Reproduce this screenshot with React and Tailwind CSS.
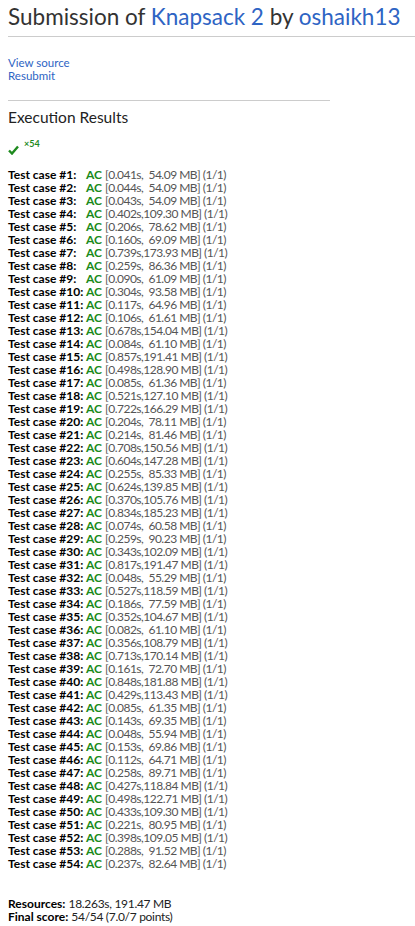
const cases = [
  ["0.041s", "54.09"], ["0.044s", "54.09"], ["0.043s", "54.09"], ["0.402s", "109.30"],
  ["0.206s", "78.62"], ["0.160s", "69.09"], ["0.739s", "173.93"], ["0.259s", "86.36"],
  ["0.090s", "61.09"], ["0.304s", "93.58"], ["0.117s", "64.96"], ["0.106s", "61.61"],
  ["0.678s", "154.04"], ["0.084s", "61.10"], ["0.857s", "191.41"], ["0.498s", "128.90"],
  ["0.085s", "61.36"], ["0.521s", "127.10"], ["0.722s", "166.29"], ["0.204s", "78.11"],
  ["0.214s", "81.46"], ["0.708s", "150.56"], ["0.604s", "147.28"], ["0.255s", "85.33"],
  ["0.624s", "139.85"], ["0.370s", "105.76"], ["0.834s", "185.23"], ["0.074s", "60.58"],
  ["0.259s", "90.23"], ["0.343s", "102.09"], ["0.817s", "191.47"], ["0.048s", "55.29"],
  ["0.527s", "118.59"], ["0.186s", "77.59"], ["0.352s", "104.67"], ["0.082s", "61.10"],
  ["0.356s", "108.79"], ["0.713s", "170.14"], ["0.161s", "72.70"], ["0.848s", "181.88"],
  ["0.429s", "113.43"], ["0.085s", "61.35"], ["0.143s", "69.35"], ["0.048s", "55.94"],
  ["0.153s", "69.86"], ["0.112s", "64.71"], ["0.258s", "89.71"], ["0.427s", "118.84"],
  ["0.498s", "122.71"], ["0.433s", "109.30"], ["0.221s", "80.95"], ["0.398s", "109.05"],
  ["0.288s", "91.52"], ["0.237s", "82.64"],
];

export default function App() {
  return (
    <div className="min-h-screen bg-white pl-2 font-['Lato',sans-serif] text-[#333]">
      {/* Title */}
      <h2 className="whitespace-nowrap border-b border-[#ccc] pt-[3px] pb-[5px] text-[22.5px] leading-[28px] text-[#333]">
        Submission of <a className="text-[#2e64c4]">Knapsack 2</a> by{" "}
        <a className="text-[#2e64c4]">oshaikh13</a>
      </h2>

      <div className="mt-[19px] flex flex-col text-[11.5px] leading-[13px] text-[#2e64c4]">
        <a>View source</a>
        <a>Resubmit</a>
      </div>

      <hr className="mt-[18px] w-[322px] border-[#ccc]" />

      <h3 className="mt-[6px] text-[15.5px] leading-[20px] text-[#222]">Execution Results</h3>

      {/* Summary */}
      <div className="mt-[12px] flex items-start gap-[5px]">
        <svg width="11" height="10" viewBox="0 0 11 10" className="mt-[6px]">
          <path d="M1 5.5 L4 8.5 L10 1.5" fill="none" stroke="#1e8a1e" strokeWidth="2.4" />
        </svg>
        <span className="text-[9px] font-bold leading-[10px] text-[#1e8a1e]">×54</span>
      </div>

      {/* Test cases */}
      <div className="mt-[13px] text-[12px] leading-[13px]">
        {cases.map(([t, m], i) => (
          <div key={i} className="flex whitespace-pre">
            <span className="w-[78px] font-bold text-black">Test case #{i + 1}:</span>
            <span className="w-[19px] font-bold text-[#1a8a1a]">AC</span>
            <span className="tracking-[-0.5px] text-[#555]">
              [{t},{m.length === 5 ? "  " : ""}{m} MB] (1/1)
            </span>
          </div>
        ))}
      </div>

      {/* Totals */}
      <div className="mt-[27px] text-[12px] leading-[13px] text-[#222]">
        <div>
          <span className="font-bold text-black">Resources:</span>{" "}
          <span className="tracking-[-0.3px]">18.263s, 191.47 MB</span>
        </div>
        <div>
          <span className="font-bold text-black">Final score:</span>{" "}
          <span className="tracking-[-0.3px]">54/54 (7.0/7 points)</span>
        </div>
      </div>
    </div>
  );
}
